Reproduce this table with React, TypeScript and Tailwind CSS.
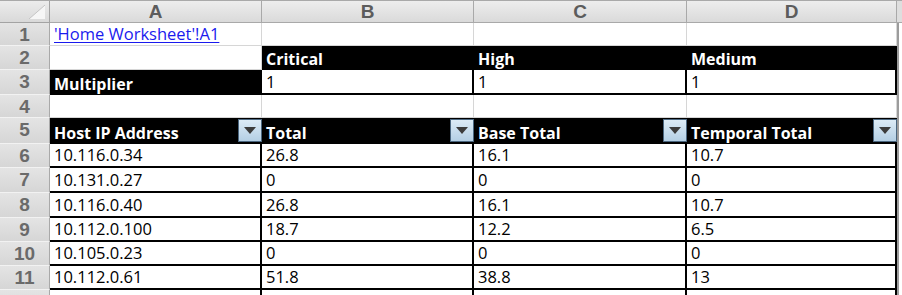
import React from "react";

type Cell = {
  text?: string;
  kind?: "plain" | "link" | "dark" | "darkFilter" | "boxed" | "data";
};

const COLS = ["A", "B", "C", "D"];
const COL_TEMPLATE = "grid-cols-[50px_212px_212px_213px_210px_5px]";

// header row, then rows 1..12
const HEIGHTS = [23, 23, 24, 25, 23, 26, 24, 25, 25, 24, 24, 24, 24];

const rows: Cell[][] = [
  [{ text: "'Home Worksheet'!A1", kind: "link" }, {}, {}, {}],
  [
    {},
    { text: "Critical", kind: "dark" },
    { text: "High", kind: "dark" },
    { text: "Medium", kind: "dark" },
  ],
  [
    { text: "Multiplier", kind: "dark" },
    { text: "1", kind: "boxed" },
    { text: "1", kind: "boxed" },
    { text: "1", kind: "boxed" },
  ],
  [{}, {}, {}, {}],
  [
    { text: "Host IP Address", kind: "darkFilter" },
    { text: "Total", kind: "darkFilter" },
    { text: "Base Total", kind: "darkFilter" },
    { text: "Temporal Total", kind: "darkFilter" },
  ],
  ...[
    ["10.116.0.34", "26.8", "16.1", "10.7"],
    ["10.131.0.27", "0", "0", "0"],
    ["10.116.0.40", "26.8", "16.1", "10.7"],
    ["10.112.0.100", "18.7", "12.2", "6.5"],
    ["10.105.0.23", "0", "0", "0"],
    ["10.112.0.61", "51.8", "38.8", "13"],
    ["", "", "", ""],
  ].map((r) => r.map((t) => ({ text: t, kind: "data" as const }))),
];

function FilterButton() {
  return (
    <div className="absolute right-0 top-[1px] flex h-[23px] w-[24px] items-center justify-center border border-[#4b6780] bg-gradient-to-b from-[#dcebf6] to-[#b4cfe4]">
      <svg width="12" height="7" viewBox="0 0 12 7">
        <path d="M0 0 H12 L6 7 Z" fill="#3c3c3c" />
      </svg>
    </div>
  );
}

function cellClass(kind: Cell["kind"]): string {
  switch (kind) {
    case "dark":
    case "darkFilter":
      return "bg-black text-white font-bold text-[16px]";
    case "boxed":
    case "data":
      return "bg-white text-black border-r-2 border-b-2 border-black text-[16.5px]";
    default:
      return "bg-white text-black border-r border-b border-[#d6d6d6] text-[16.5px]";
  }
}

export default function App() {
  return (
    <div className="h-[295px] w-[902px] overflow-hidden bg-white font-['Open_Sans','Noto_Sans',sans-serif]">
      {/* column letters */}
      <div
        className={`grid ${COL_TEMPLATE} border-t border-[#a9a9a9]`}
        style={{ height: HEIGHTS[0] }}
      >
        <div className="relative border-b border-r border-[#a3a3a3] bg-gradient-to-b from-[#ececec] to-[#d9d9d9]">
          <svg className="absolute bottom-[3px] right-[4px]" width="16" height="14" viewBox="0 0 16 14">
            <path d="M16 0 V14 H0 Z" fill="#f6f6f6" />
            <path d="M16 0 L0 14" stroke="#c4c4c4" strokeWidth="1" />
          </svg>
        </div>
        {COLS.map((c) => (
          <div
            key={c}
            className="flex items-center justify-center border-b border-r border-[#a9a9a9] bg-gradient-to-b from-[#ededed] to-[#dadada] font-['Liberation_Sans',Arial,sans-serif] text-[19px] font-bold leading-none text-[#5c5c5c]"
          >
            {c}
          </div>
        ))}
        <div className="border-b border-[#a9a9a9] bg-[#dedede]" />
      </div>

      {rows.map((row, ri) => (
        <div
          key={ri}
          className={`grid ${COL_TEMPLATE}`}
          style={{ height: HEIGHTS[ri + 1] }}
        >
          <div className="flex items-start justify-center overflow-hidden border-b border-r border-[#f2f2f2] border-r-[#a9a9a9] bg-gradient-to-b from-[#e4e4e4] to-[#d6d6d6] font-['Liberation_Sans',Arial,sans-serif] text-[19px] font-bold leading-[23px] text-[#6a6a6a]">
            {ri + 1}
          </div>
          {row.map((cell, ci) => (
            <div
              key={ci}
              className={`relative flex items-end whitespace-nowrap pb-[1px] pl-[4px] leading-[20px] ${cellClass(
                cell.kind
              )}`}
            >
              {cell.kind === "link" ? (
                <span className="text-[#1a1aee] underline decoration-1 underline-offset-2">
                  {cell.text}
                </span>
              ) : (
                <span>{cell.text}</span>
              )}
              {cell.kind === "darkFilter" && <FilterButton />}
            </div>
          ))}
          <div className="border-l-2 border-[#9c9c9c] bg-white" />
        </div>
      ))}
    </div>
  );
}
